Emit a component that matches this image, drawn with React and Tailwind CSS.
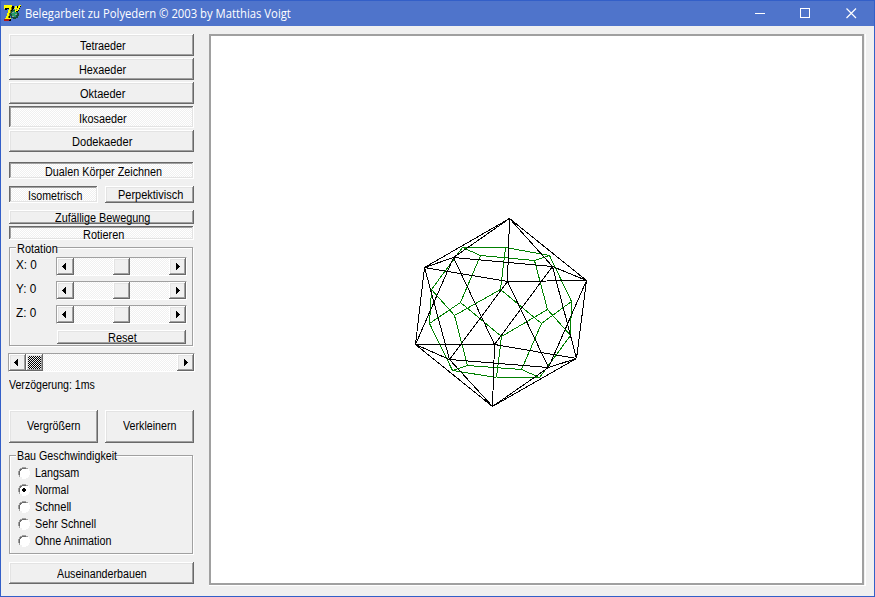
import { useLayoutEffect, useRef } from "react";

const RAISED =
  "shadow-[inset_-1px_-1px_#696969,inset_1px_1px_#ffffff,inset_-2px_-2px_#a0a0a0,inset_2px_2px_#e3e3e3]";
const PRESSED =
  "shadow-[inset_-1px_-1px_#ffffff,inset_1px_1px_#696969,inset_-2px_-2px_#e3e3e3,inset_2px_2px_#a0a0a0]";
const DITHER =
  "bg-[conic-gradient(#ffffff_25%,#f0f0f0_0_50%,#ffffff_0_75%,#f0f0f0_0)] bg-[length:2px_2px]";
const DARK_DITHER =
  "bg-[conic-gradient(#000000_25%,#f0f0f0_0_50%,#000000_0_75%,#f0f0f0_0)] bg-[length:2px_2px]";

// Condenses a label to the width of the bitmap dialog font.
function Label({ w, children, className = "" }) {
  const ref = useRef(null);
  useLayoutEffect(() => {
    const el = ref.current;
    el.style.transform = `scaleX(${w / el.offsetWidth})`;
  }, [w]);
  return (
    <span ref={ref} className={`inline-block origin-left whitespace-nowrap ${className}`}>
      {children}
    </span>
  );
}

function Button({ pad, w, children, pressed, className = "" }) {
  return (
    <button
      className={`flex shrink-0 items-start text-left ${pressed ? `${PRESSED} ${DITHER}` : RAISED} ${pad} ${className}`}
    >
      <Label w={w}>{children}</Label>
    </button>
  );
}

function Arrow({ right }) {
  return (
    <span className={`flex w-[17px] shrink-0 items-center bg-[#f0f0f0] ${right ? "pl-[7px]" : "pl-[5px]"} ${RAISED}`}>
      <svg width="4" height="7" viewBox="0 0 4 7" shapeRendering="crispEdges">
        <path d={right ? "M0 0h1v1h1v1h1v1h1v1h-1v1h-1v1h-1v1h-1z" : "M4 0h-1v1h-1v1h-1v1h-1v1h1v1h1v1h1v1h1z"} />
      </svg>
    </span>
  );
}

function Scroll({ className, gap, active }) {
  return (
    <div
      className={`flex h-[19px] shrink-0 border border-t-[#a0a0a0] border-r-white border-b-white border-l-[#a0a0a0] ${DITHER} ${className}`}
    >
      <Arrow />
      <span className={`flex w-[17px] shrink-0 p-[2px] ${gap} ${RAISED} bg-[#f0f0f0]`}>
        {active && <span className={`flex-1 ${DARK_DITHER}`} />}
      </span>
      <span className="flex-1" />
      <Arrow right />
    </div>
  );
}

function Axis({ name }) {
  return (
    <div className="flex h-6 items-start pl-[6px]">
      <span className="w-[40px] pt-[1px]">
        <Label w={20.5}>{name}: 0</Label>
      </span>
      <Scroll className="w-[131px]" gap="ml-[39px]" />
    </div>
  );
}

function Radio({ label, w, checked }) {
  return (
    <label className="flex h-[17px] items-center pl-2">
      <svg width="12" height="12" viewBox="0 0 12 12" shapeRendering="crispEdges">
        <path d="M4 1h4v1h2v2h1v4h-1v2h-2v1h-4v-1h-2v-2h-1v-4h1v-2h2z" fill="#fff" />
        <path d="M4 0h4v1h2v1h-2v-1h-4v1h-2v2h-1v4h1v2h-1v-2h-1v-4h1v-2h1v-1h2z" fill="#a0a0a0" />
        <path d="M4 1h4v1h-4v1h-1v1h-1v4h-1v-4h1v-2h2z" fill="#696969" />
        <path d="M10 2h1v2h1v4h-1v2h-1v1h-2v1h-4v-1h4v-1h2v-2h1v-4h-1z" fill="#fff" />
        {checked && <path d="M5 4h2v1h1v2h-1v1h-2v-1h-1v-2h1z" fill="#000" />}
      </svg>
      <Label w={w} className="ml-[5px]">{label}</Label>
    </label>
  );
}

function Group({ title, w, className, children }) {
  return (
    <fieldset
      className={`relative shrink-0 border border-[#a0a0a0] shadow-[1px_1px_#fff,inset_1px_1px_#fff] ${className}`}
    >
      <span
        className={`absolute left-[6px] flex h-[14px] bg-[#f0f0f0] pl-px ${title === "Rotation" ? "-top-[6px]" : "-top-[7px]"}`}
      >
        <span className={title === "Rotation" ? "w-[40px]" : "w-[99px]"}>
          <Label w={w}>{title}</Label>
        </span>
      </span>
      {children}
    </fieldset>
  );
}

const V = {
  T: [509, 218], L: [424, 267], R: [586, 280], K: [415, 344], M: [576, 358], B: [492, 406],
  A: [453, 257], N: [552, 266], C: [507, 281], D: [494, 344], E: [449, 359], F: [548, 367],
};
const EDGES =
  "TL LK KB BM MR RT AN ND DA CE EF FC TA TN TC LA LC LE RN RC RF KA KE KD BD BE BF MN MD MF".split(" ");

const linked = (a, b) => EDGES.includes(a + b) || EDGES.includes(b + a);
const names = Object.keys(V);
const FACES = [];
names.forEach((a, i) =>
  names.slice(i + 1).forEach((b, j) =>
    names.slice(i + j + 2).forEach((c) => {
      if (linked(a, b) && linked(b, c) && linked(a, c)) FACES.push([a, b, c]);
    })
  )
);
const center = (f) => [0, 1].map((k) => Math.round(f.reduce((s, n) => s + V[n][k], 0) / 3));
const DUAL = [];
FACES.forEach((f, i) =>
  FACES.slice(i + 1).forEach((g) => {
    if (f.filter((n) => g.includes(n)).length === 2) DUAL.push([center(f), center(g)]);
  })
);

function Line({ a, b, color }) {
  return <line x1={a[0] + 0.5} y1={a[1] + 0.5} x2={b[0] + 0.5} y2={b[1] + 0.5} stroke={color} />;
}

function Polyhedron() {
  return (
    <svg width="651" height="547" viewBox="211 36 651 547" shapeRendering="crispEdges">
      {DUAL.map(([a, b], i) => <Line key={i} a={a} b={b} color="#008000" />)}
      {EDGES.map((e) => <Line key={e} a={V[e[0]]} b={V[e[1]]} color="#000" />)}
    </svg>
  );
}

function AppIcon() {
  return (
    <svg width="17" height="17" viewBox="0 0 17 17" shapeRendering="crispEdges">
      <path d="M1 1h9v3H9v2H8v2H7v3H6v3h1v2H1v-2h2v-3h1V8h1V6h1V4H3v1H1z" fill="#000" />
      <path d="M0 0h8v2H7v3H6v3H5v3H4v2H2v-2h1V8h1V5h1V3H1v1H0z" fill="#ffff00" />
      <path d="M7 2h1v3H7v3H6v3H5v2H4v-2h1V8h1V5h1z" fill="#808000" />
      <path d="M1 13h6v1H1z" fill="#ffff00" />
      <path d="M0 14h6v1H5v1H0z" fill="#b01818" />
      <path d="M8 5h4v1h2v2h1v3h-1v2h-2v1H9v-1H7v-2H6V8h1V6h1z" fill="#174b3b" />
      <path d="M9 6h2v1h2v3h-1v2H9v-1H8V9H7V8h2z" fill="#259c67" />
      <path d="M8 7h2v1H8zM11 9h2v1h-2zM8 11h2v1H8z" fill="#8f97a5" />
      <path d="M11 1h2v3h-1v3h-1V4h-1V3h1z" fill="#ffff00" />
      <path d="M15 0h2v1h-1v2h-1v2h-1v1h-2V5h1V3h1V1h1z" fill="#ffff00" />
      <path d="M16 1h1v1h-1v2h-1v2h-1v1h-2V6h2V5h1V3h1zM13 1h1v2h-1z" fill="#000" />
    </svg>
  );
}

export default function App() {
  return (
    <div className="flex h-[597px] w-[875px] flex-col overflow-hidden border border-[#335fc8] bg-[#f0f0f0] font-['Liberation_Sans',sans-serif] text-[12px] leading-[14px] text-black">
      <header className="flex h-[25px] shrink-0 items-center bg-[#4f74cb] pl-[3px] text-white">
        <AppIcon />
        <span className="ml-[4px] font-['Open_Sans',sans-serif] text-[12px] leading-4">
          <Label w={266}>Belegarbeit zu Polyedern © 2003 by Matthias Voigt</Label>
        </span>
        <svg className="ml-auto mr-[17px]" width="102" height="11" viewBox="0 0 102 11" fill="none" stroke="#fff">
          <path d="M0 5.5h10M45.5.5h9v9h-9z" shapeRendering="crispEdges" />
          <path d="M91.5.5l9.5 9.5M101 .5L91.5 10" strokeWidth="1.2" />
        </svg>
      </header>

      <div className="flex min-h-0 flex-1">
        <aside className="flex w-[208px] shrink-0 flex-col pl-2 pt-2">
          <div className="flex flex-col gap-[2px]">
            <Button className="h-[22px] w-[185px]" pad="pl-[71px] pt-[5px]" w={46}>Tetraeder</Button>
            <Button className="h-[22px] w-[185px]" pad="pl-[70px] pt-[5px]" w={47}>Hexaeder</Button>
            <Button className="h-[22px] w-[185px]" pad="pl-[71px] pt-[5px]" w={45}>Oktaeder</Button>
            <Button className="h-[22px] w-[185px]" pad="pl-[70px] pt-[6px]" w={48} pressed>Ikosaeder</Button>
            <Button className="h-[22px] w-[185px]" pad="pl-[63px] pt-[5px]" w={60}>Dodekaeder</Button>
          </div>
          <Button className="mt-[10px] h-[17px] w-[185px]" pad="pl-[36px] pt-[3px]" w={117} pressed>
            Dualen Körper Zeichnen
          </Button>
          <div className="mt-[7px] flex gap-[7px]">
            <Button className="h-[17px] w-[89px]" pad="pl-[19px] pt-[3px]" w={54} pressed>Isometrisch</Button>
            <Button className="h-[17px] w-[89px]" pad="pl-[13px] pt-[2px]" w={65}>Perpektivisch</Button>
          </div>
          <Button className="mt-[7px] h-[14px] w-[185px]" pad="pl-[46px] pt-[1px]" w={95}>Zufällige Bewegung</Button>
          <Button className="mt-[2px] h-[14px] w-[185px]" pad="pl-[74px] pt-[2px]" w={41} pressed>Rotieren</Button>

          <Group title="Rotation" w={41} className="mt-[7px] h-[99px] w-[184px]">
            <div className="pt-[9px]">
              <Axis name="X" />
              <Axis name="Y" />
              <Axis name="Z" />
            </div>
            <Button className="ml-[47px] mt-[1px] h-[14px] w-[129px]" pad="pl-[51px] pt-[1px]" w={28.5}>Reset</Button>
          </Group>

          <Scroll className="-ml-px mt-[7px] w-[187px]" gap="" active />
          <div className="mt-[6px]"><Label w={85.5}>Verzögerung: 1ms</Label></div>

          <div className="mt-[18px] flex gap-[7px]">
            <Button className="h-[33px] w-[89px]" pad="pl-[18px] pt-[9px]" w={53.5}>Vergrößern</Button>
            <Button className="h-[33px] w-[89px]" pad="pl-[18px] pt-[9px]" w={53.5}>Verkleinern</Button>
          </div>

          <Group title="Bau Geschwindigkeit" w={100} className="mt-[12px] h-[99px] w-[184px]">
            <div className="pt-[8px]">
              <Radio label="Langsam" w={44} />
              <Radio label="Normal" w={34} checked />
              <Radio label="Schnell" w={36} />
              <Radio label="Sehr Schnell" w={61} />
              <Radio label="Ohne Animation" w={76} />
            </div>
          </Group>
          <Button className="mt-[8px] h-[22px] w-[185px]" pad="pl-[48px] pt-[5px]" w={90}>Auseinanderbauen</Button>
        </aside>

        <main className="mt-2 h-[552px] w-[657px] border-r border-b border-white">
          <div className="h-[551px] w-[655px] border-2 border-[#a0a0a0] bg-white">
            <Polyhedron />
          </div>
        </main>
      </div>
    </div>
  );
}
